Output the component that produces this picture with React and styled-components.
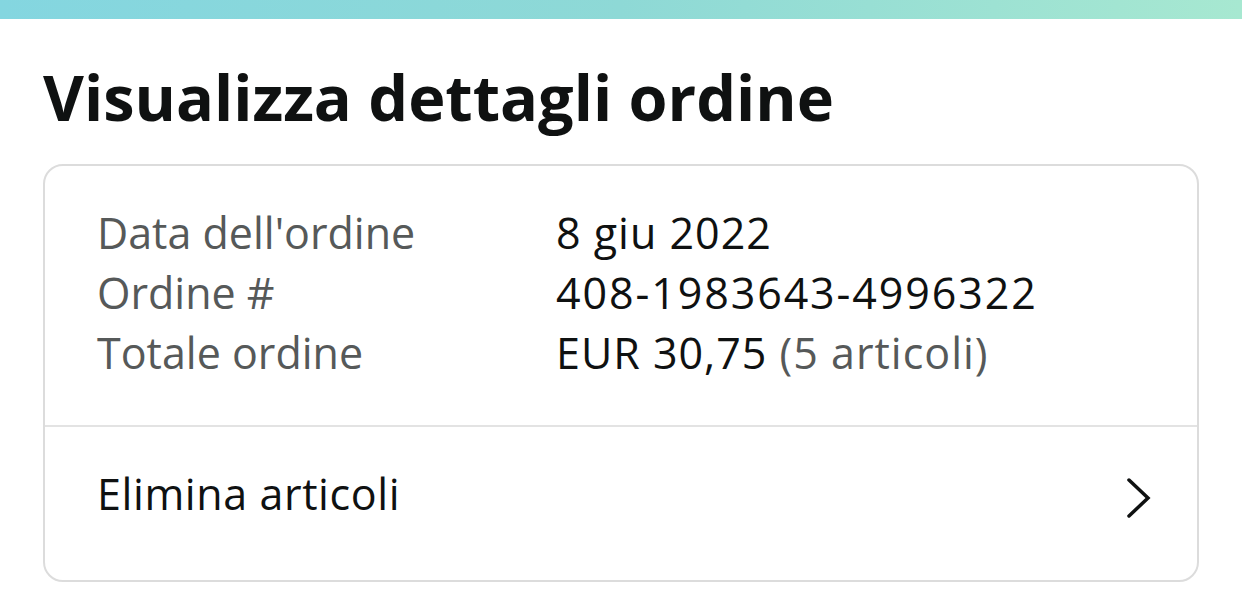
import React from "react";
import styled, { createGlobalStyle } from "styled-components";

const Global = createGlobalStyle`
  html, body { margin: 0; padding: 0; background: #ffffff; }
  body { font-family: "Open Sans", "Noto Sans", sans-serif; color: #0f1111; }
`;

const Page = styled.div`
  width: 1242px;
  height: 591px;
  overflow: hidden;
  display: flex;
  flex-direction: column;
`;

const TopBar = styled.div`
  height: 19px;
  background: linear-gradient(90deg, #84d6e0 0%, #8ed9d6 50%, #a7e8d1 100%);
`;

const Content = styled.div`
  padding: 0 43px;
  display: flex;
  flex-direction: column;
`;

const Title = styled.h1`
  margin: 0 0 32px;
  padding-top: 43px;
  font-size: 63px;
  line-height: 70px;
  font-weight: 700;
  color: #0f1111;
  letter-spacing: 0;
  white-space: nowrap;
`;

const Card = styled.div`
  border: 2px solid #dcdcdc;
  border-radius: 20px;
  display: flex;
  flex-direction: column;
`;

const InfoSection = styled.div`
  padding: 37px 52px 42px;
  display: grid;
  grid-template-columns: 459px 1fr;
  font-size: 43px;
  line-height: 60px;
`;

const Label = styled.div`
  color: #565959;
`;

const Value = styled.div`
  color: #0f1111;
  letter-spacing: ${(p) => (p.$wide ? "1.9px" : "1px")};
  white-space: nowrap;
`;

const Muted = styled.span`
  color: #565959;
`;

const Divider = styled.div`
  height: 2px;
  background: #e3e3e3;
`;

const ActionRow = styled.div`
  height: 153px;
  box-sizing: border-box;
  padding: 0 44px 20px 52px;
  display: flex;
  align-items: center;
  justify-content: space-between;
  font-size: 43px;
  line-height: 60px;
  letter-spacing: 0.6px;
  color: #0f1111;
`;

const ChevronIcon = styled.svg`
  margin-top: 8px;
  flex: none;
`;

const Chevron = () => (
  <ChevronIcon width="28" height="42" viewBox="0 0 28 42" fill="none">
    <path d="M4 3 L23 21 L4 39" stroke="#0f1111" strokeWidth="3.5" strokeLinecap="round" strokeLinejoin="miter" />
  </ChevronIcon>
);

export default function App() {
  return (
    <Page>
      <Global />
      <TopBar />
      <Content>
        <Title>Visualizza dettagli ordine</Title>
        <Card>
          <InfoSection>
            <Label>Data dell'ordine</Label>
            <Value>8 giu 2022</Value>
            <Label>Ordine #</Label>
            <Value $wide>408-1983643-4996322</Value>
            <Label>Totale ordine</Label>
            <Value>
              EUR 30,75 <Muted>(5 articoli)</Muted>
            </Value>
          </InfoSection>
          <Divider />
          <ActionRow>
            <span>Elimina articoli</span>
            <Chevron />
          </ActionRow>
        </Card>
      </Content>
    </Page>
  );
}
